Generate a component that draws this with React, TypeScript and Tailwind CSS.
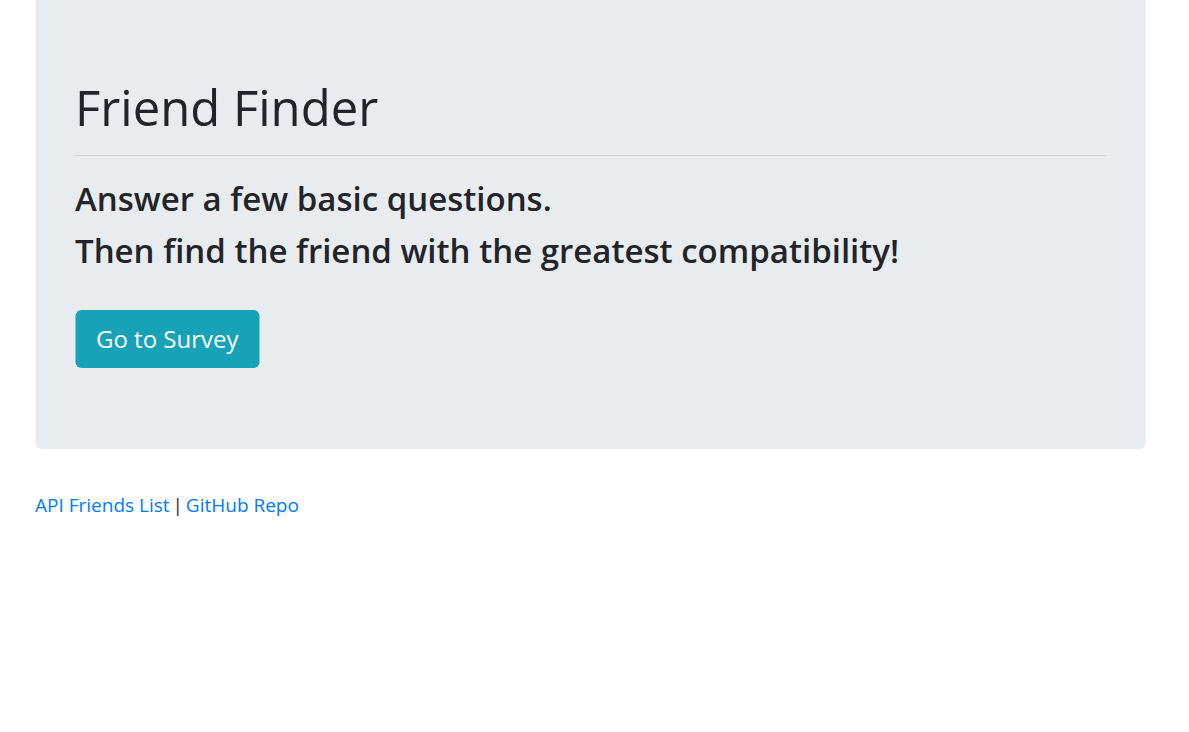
export default function App() {
  return (
    <div className="min-h-screen bg-white font-['Open_Sans',sans-serif] text-[#212529]">
      <div className="mx-auto w-[1110px] -translate-x-[4.5px]">
        <section className="rounded-b-md bg-[#e9ecef] px-10 pt-[78px] pb-[81px]">
          <h1 className="text-[49px] leading-[1.2] font-normal">Friend Finder</h1>
          <hr className="mt-[18px] mb-[17px] border-t border-black/10" />
          <h2 className="text-[33px] leading-[52px] font-semibold">Answer a few basic questions.</h2>
          <h2 className="text-[33px] leading-[52px] font-semibold">Then find the friend with the greatest compatibility!</h2>
          <a
            href="#"
            className="mt-[33px] inline-flex h-[58px] items-center rounded-md bg-[#17a2b8] px-[21px] text-[24px] text-white"
          >
            Go to Survey
          </a>
        </section>
        <div className="mt-[42px] text-[19px]">
          <a href="#" className="text-[#007bff]">API Friends List</a>
          <span className="-mx-[2px]">&nbsp;|&nbsp;</span>
          <a href="#" className="text-[#007bff]">GitHub Repo</a>
        </div>
      </div>
    </div>
  )
}
